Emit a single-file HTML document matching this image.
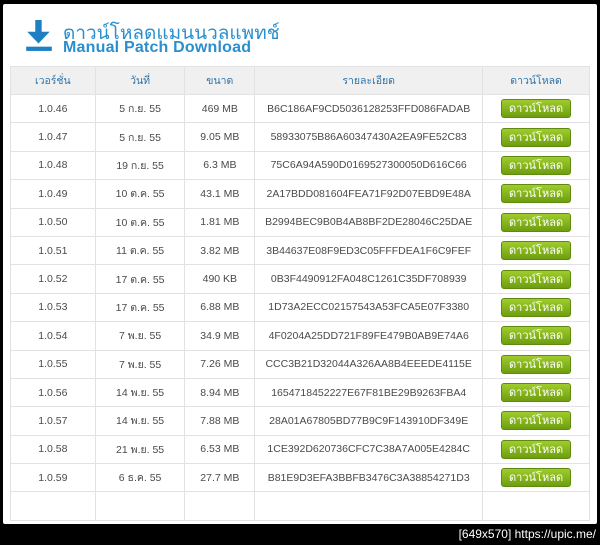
<!DOCTYPE html>
<html><head><meta charset="utf-8"><style>
body{margin:0;width:600px;height:545px;background:#000;overflow:hidden;font-family:"Liberation Sans","DejaVu Sans",sans-serif}
.panel{position:absolute;left:3px;top:4px;width:594px;height:520px;background:#fff;border-radius:2px}
.hdr{position:absolute;left:22px;top:16px}
.t1{position:absolute;left:60px;top:14px;font-size:19px;color:#2a8fcf;white-space:nowrap}
.t2{position:absolute;left:60px;top:35px;font-size:16px;font-weight:bold;color:#2a8fcf;white-space:nowrap;letter-spacing:.2px}
table{position:absolute;left:10px;top:66px;border-collapse:collapse;width:580px;font-size:10.5px;color:#4a4a4a}
td,th{border:1px solid #e2e2e2;text-align:center;height:27.4px;padding:0;background:#fff}
th{background:#f0f0f0;color:#2f74a8;font-weight:normal;height:27px}
.b{display:inline-block;width:70px;height:19px;line-height:19px;border-radius:3px;color:#fff;font-size:11px;background:linear-gradient(#9fcc2c,#6e9e0f);border:1px solid #5f8a10;box-sizing:border-box}
.wm{position:absolute;right:4px;top:527px;color:#fff;font-size:12px}
</style></head><body>
<div class="panel">
<svg class="hdr" width="28" height="32" viewBox="0 0 26 30"><rect x="9.5" y="0" width="6" height="13" fill="#1e7fc2"/><path d="M2 11 L23 11 L12.5 22 Z" fill="#1e7fc2"/><rect x="1" y="25" width="24" height="4" fill="#1e7fc2"/></svg>
<div class="t1">ดาวน์โหลดแมนนวลแพทช์</div>
<div class="t2">Manual Patch Download</div>
</div>
<table>
<colgroup><col style="width:85px"><col style="width:90px"><col style="width:70px"><col style="width:228px"><col style="width:107px"></colgroup>
<tr><th>เวอร์ชั่น</th><th>วันที่</th><th>ขนาด</th><th>รายละเอียด</th><th>ดาวน์โหลด</th></tr>
<tr><td>1.0.46</td><td>5 ก.ย. 55</td><td>469 MB</td><td>B6C186AF9CD5036128253FFD086FADAB</td><td><span class="b">ดาวน์โหลด</span></td></tr>
<tr><td>1.0.47</td><td>5 ก.ย. 55</td><td>9.05 MB</td><td>58933075B86A60347430A2EA9FE52C83</td><td><span class="b">ดาวน์โหลด</span></td></tr>
<tr><td>1.0.48</td><td>19 ก.ย. 55</td><td>6.3 MB</td><td>75C6A94A590D0169527300050D616C66</td><td><span class="b">ดาวน์โหลด</span></td></tr>
<tr><td>1.0.49</td><td>10 ต.ค. 55</td><td>43.1 MB</td><td>2A17BDD081604FEA71F92D07EBD9E48A</td><td><span class="b">ดาวน์โหลด</span></td></tr>
<tr><td>1.0.50</td><td>10 ต.ค. 55</td><td>1.81 MB</td><td>B2994BEC9B0B4AB8BF2DE28046C25DAE</td><td><span class="b">ดาวน์โหลด</span></td></tr>
<tr><td>1.0.51</td><td>11 ต.ค. 55</td><td>3.82 MB</td><td>3B44637E08F9ED3C05FFFDEA1F6C9FEF</td><td><span class="b">ดาวน์โหลด</span></td></tr>
<tr><td>1.0.52</td><td>17 ต.ค. 55</td><td>490 KB</td><td>0B3F4490912FA048C1261C35DF708939</td><td><span class="b">ดาวน์โหลด</span></td></tr>
<tr><td>1.0.53</td><td>17 ต.ค. 55</td><td>6.88 MB</td><td>1D73A2ECC02157543A53FCA5E07F3380</td><td><span class="b">ดาวน์โหลด</span></td></tr>
<tr><td>1.0.54</td><td>7 พ.ย. 55</td><td>34.9 MB</td><td>4F0204A25DD721F89FE479B0AB9E74A6</td><td><span class="b">ดาวน์โหลด</span></td></tr>
<tr><td>1.0.55</td><td>7 พ.ย. 55</td><td>7.26 MB</td><td>CCC3B21D32044A326AA8B4EEEDE4115E</td><td><span class="b">ดาวน์โหลด</span></td></tr>
<tr><td>1.0.56</td><td>14 พ.ย. 55</td><td>8.94 MB</td><td>1654718452227E67F81BE29B9263FBA4</td><td><span class="b">ดาวน์โหลด</span></td></tr>
<tr><td>1.0.57</td><td>14 พ.ย. 55</td><td>7.88 MB</td><td>28A01A67805BD77B9C9F143910DF349E</td><td><span class="b">ดาวน์โหลด</span></td></tr>
<tr><td>1.0.58</td><td>21 พ.ย. 55</td><td>6.53 MB</td><td>1CE392D620736CFC7C38A7A005E4284C</td><td><span class="b">ดาวน์โหลด</span></td></tr>
<tr><td>1.0.59</td><td>6 ธ.ค. 55</td><td>27.7 MB</td><td>B81E9D3EFA3BBFB3476C3A38854271D3</td><td><span class="b">ดาวน์โหลด</span></td></tr>
<tr><td></td><td></td><td></td><td></td><td></td></tr>
</table>
<div class="wm">[649x570] https://upic.me/</div>
</body></html>
